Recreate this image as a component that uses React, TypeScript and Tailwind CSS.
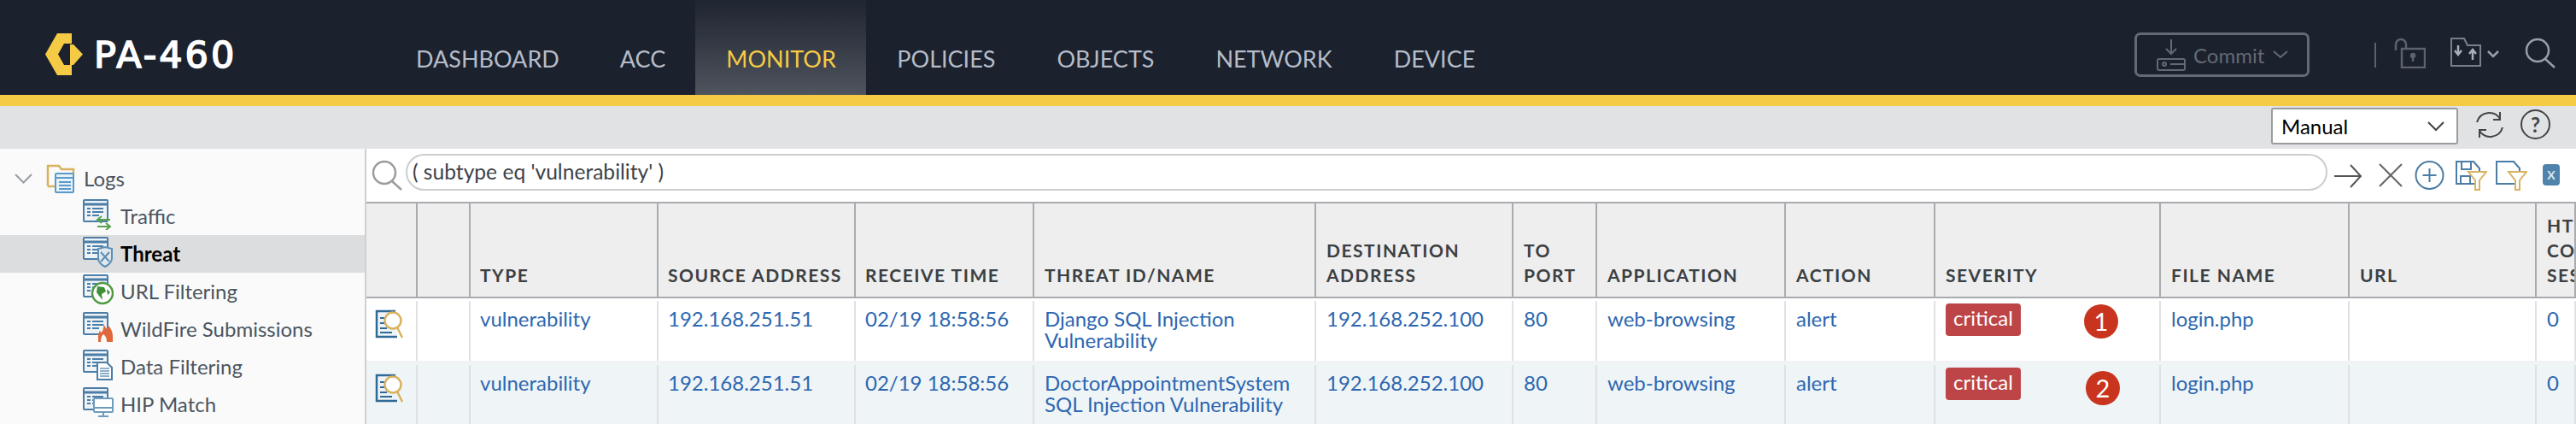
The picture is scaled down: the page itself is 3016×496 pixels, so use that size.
import type { ReactNode } from 'react';

const COLS =
  'grid grid-cols-[60px_62px_220px_231px_209px_330px_231px_98px_221px_175px_264px_221px_219px_46px]';

const NAV = ['DASHBOARD', 'ACC', 'MONITOR', 'POLICIES', 'OBJECTS', 'NETWORK', 'DEVICE'];

const BLUE = '#4b7da6';
const GOLD = '#d9b25f';

const HEADERS: string[][] = [
  [],
  [],
  ['TYPE'],
  ['SOURCE ADDRESS'],
  ['RECEIVE TIME'],
  ['THREAT ID/NAME'],
  ['DESTINATION', 'ADDRESS'],
  ['TO', 'PORT'],
  ['APPLICATION'],
  ['ACTION'],
  ['SEVERITY'],
  ['FILE NAME'],
  ['URL'],
  ['HTTP/2', 'CONNECTION', 'SESSION'],
];

const ROWS = [
  { name: ['Django SQL Injection', 'Vulnerability'], mark: '1', markClass: 'left-[174px] top-[4px]' },
  { name: ['DoctorAppointmentSystem', 'SQL Injection Vulnerability'], mark: '2', markClass: 'left-[176px] top-[7px]' },
];

// base sheet shared by the log type icons
function Sheet({ children }: { children?: ReactNode }) {
  return (
    <svg width="36" height="36" viewBox="0 0 36 36" fill="none" className="shrink-0 self-start mt-[2px]">
      <rect x="1" y="1" width="28" height="25" rx="1" fill="#eef3f7" stroke={BLUE} strokeWidth="2" />
      <path d="M2 6h26" stroke={BLUE} strokeWidth="3" />
      <path d="M5 11h4M5 15h4M5 19h4M11 11h13M11 15h13M11 19h8" stroke={BLUE} strokeWidth="2" />
      {children}
    </svg>
  );
}

function LogsIcon() {
  return (
    <svg width="34" height="36" viewBox="0 0 34 36" fill="none" className="shrink-0">
      <path d="M2 27V3h13l3 4h14v5" stroke={GOLD} strokeWidth="2.5" />
      <path d="M2 27h8" stroke={GOLD} strokeWidth="2.5" />
      <rect x="11" y="12" width="21" height="22" rx="1" fill="#e8f1f8" stroke="#5a9ac8" strokeWidth="2" />
      <path d="M12 17h19M15 22h14M15 26h14M15 30h14" stroke="#5a9ac8" strokeWidth="2" />
    </svg>
  );
}

function ReportIcon() {
  return (
    <svg width="36" height="36" viewBox="0 0 36 36" fill="none" className="shrink-0">
      <path d="M24 2H2v30h24" fill="#eef3f7" stroke="#2f6a96" strokeWidth="2.5" />
      <path d="M6 10h8M6 16h6M6 22h8M6 27h14" stroke="#2f6a96" strokeWidth="2" />
      <circle cx="21" cy="13" r="9.5" fill="#fff" stroke={GOLD} strokeWidth="2.5" />
      <path d="M26 21l6 12" stroke={GOLD} strokeWidth="2.5" />
    </svg>
  );
}

function Annotation({ mark, className }: { mark: string; className: string }) {
  return (
    <span
      className={`absolute w-[40px] h-[40px] rounded-full bg-[#c9341f] text-white text-[29px] leading-[40px] text-center ${className}`}
    >
      {mark}
    </span>
  );
}

function TreeRow({ label, icon, active }: { label: string; icon: ReactNode; active?: boolean }) {
  return (
    <div className={`h-[44px] flex items-center pl-[97px] gap-[8px] ${active ? 'bg-[#dcddde]' : ''}`}>
      {icon}
      <span className={`-mt-[2px] ${active ? 'font-bold text-black' : 'text-[#4b5560]'}`}>{label}</span>
    </div>
  );
}

function Cell({ children, wide }: { children?: ReactNode; wide?: boolean }) {
  return (
    <div
      className={`mt-[3px] border-r-2 border-[#dfe1e3] pt-[8px] overflow-hidden whitespace-nowrap ${
        wide ? 'pl-[12px]' : 'pl-[11px]'
      }`}
    >
      {children}
    </div>
  );
}

export default function App() {
  return (
    <div className="w-[3016px] h-[496px] overflow-hidden bg-white [font-family:Lato,sans-serif] text-[24px] leading-[25px]">
      {/* top bar */}
      <header className="h-[111px] bg-[#1b212d] flex">
        <div className="w-[487px] shrink-0 flex items-start pl-[53px] pt-[39px] gap-[13px]">
          <svg width="44" height="49" viewBox="0 0 44 49">
            <path
              d="M31 0H14L0 24.5 14 49h17V37h-9l-7-12.5L22 12h9zM29 13h4l11 11.5L33 37h-4z"
              fill="#f5cb45"
              fillRule="evenodd"
            />
          </svg>
          <span className="[font-family:'DejaVu_Sans',sans-serif] text-[43px] leading-[50px] tracking-[3px] text-white [-webkit-text-stroke:1.6px_white]">
            PA-460
          </span>
        </div>
        <nav className="flex">
          {NAV.map((item) =>
            item === 'MONITOR' ? (
              <div
                key={item}
                className="w-[200px] pl-[36px] pt-[54px] bg-gradient-to-b from-[#1f2531] to-[#4f545d] text-[#f5cb45] text-[27px] leading-[30px]"
              >
                {item}
              </div>
            ) : (
              <div
                key={item}
                className={`pt-[54px] text-[#b5bcc9] text-[27px] leading-[30px] ${
                  item === 'DASHBOARD' ? 'mr-[71px]' : item === 'ACC' ? 'mr-[35px]' : 'ml-[36px] mr-[36px]'
                }`}
              >
                {item}
              </div>
            ),
          )}
        </nav>
        <div className="ml-auto flex items-start pt-[38px]">
          <div className="w-[205px] h-[52px] border-[3px] border-[#646a73] rounded-[7px] flex items-center pl-[23px] gap-[9px] text-[#646a73]">
            <svg width="34" height="38" viewBox="0 0 34 38" fill="none" stroke="#646a73" strokeWidth="2">
              <path d="M17 1v17M11 12l6 6 6-6" />
              <rect x="1" y="24" width="32" height="13" rx="2" />
              <circle cx="9" cy="30" r="2" />
              <path d="M16 30h17" />
            </svg>
            <span>Commit</span>
            <svg width="18" height="10" viewBox="0 0 18 10" fill="none" stroke="#646a73" strokeWidth="2" className="ml-[1px]">
              <path d="M1 1l8 7 8-7" />
            </svg>
          </div>
          <div className="w-[2px] h-[29px] mt-[12px] ml-[76px] bg-[#5d636c]" />
          <svg width="37" height="36" viewBox="0 0 37 36" fill="none" stroke="#5d636c" strokeWidth="2.5" className="mt-[6px] ml-[21px]">
            <path d="M2 15V8a6 6 0 0 1 12 0v5" />
            <rect x="9" y="13" width="27" height="22" />
            <circle cx="22" cy="21" r="2" fill="#5d636c" />
            <path d="M22 22v6" />
          </svg>
          <svg width="36" height="34" viewBox="0 0 36 34" fill="none" className="mt-[6px] ml-[29px]">
            <path d="M1 33V1h15l4 8h15v24z" stroke="#7a808a" strokeWidth="2" />
            <path d="M9 9v11M5 15l4 5 4-5M26 26V14M22 19l4-5 4 5" stroke="#aab0b8" strokeWidth="2.5" />
          </svg>
          <svg width="14" height="10" viewBox="0 0 14 10" fill="none" stroke="#9aa0a8" strokeWidth="2.5" className="mt-[21px] ml-[7px]">
            <path d="M1 1l6 6 6-6" />
          </svg>
          <svg width="37" height="36" viewBox="0 0 37 36" fill="none" stroke="#9aa0a8" strokeWidth="2.5" className="mt-[6px] ml-[30px] mr-[23px]">
            <circle cx="15" cy="15" r="13" />
            <path d="M24 25l11 10" />
          </svg>
        </div>
      </header>
      <div className="h-[13px] bg-[#f5cb45]" />

      {/* manual refresh strip */}
      <div className="h-[50px] bg-[#e1e2e4] flex items-start justify-end pt-[2px] pr-[30px]">
        <div className="w-[219px] h-[43px] bg-white border-2 border-[#9a9ca0] rounded-[3px] flex items-center justify-between pl-[10px] pr-[14px] text-black">
          <span>Manual</span>
          <svg width="20" height="12" viewBox="0 0 20 12" fill="none" stroke="#444" strokeWidth="2">
            <path d="M1 1l9 9 9-9" />
          </svg>
        </div>
        <svg width="34" height="32" viewBox="0 0 34 32" fill="none" stroke="#444" strokeWidth="2" className="mt-[4px] ml-[20px]">
          <path d="M2 13A15 15 0 0 1 29 9M32 19A15 15 0 0 1 5 23" />
          <path d="M29 1v9h-8M5 31v-9h8" />
        </svg>
        <div className="w-[35px] h-[35px] mt-[2px] ml-[19px] rounded-full border-2 border-[#444] text-[#444] text-center leading-[31px] font-bold">
          ?
        </div>
      </div>

      <div className="flex h-[322px]">
        {/* tree */}
        <aside className="w-[429px] shrink-0 pt-[13px] bg-[#fafafa] border-r-2 border-[#cfd0d2]">
          <div className="h-[44px] flex items-center pl-[17px] text-[#4b5560]">
            <svg width="21" height="12" viewBox="0 0 21 12" fill="none" stroke="#9a9ea3" strokeWidth="2">
              <path d="M1 1l9.500 9.500L20 1" />
            </svg>
            <span className="ml-[16px]">
              <LogsIcon />
            </span>
            <span className="ml-[10px] -mt-[2px]">Logs</span>
          </div>
          <TreeRow
            label="Traffic"
            icon={
              <Sheet>
                <path d="M18 24h14M22 20l-5 4 5 4M17 32h15M27 28l5 4-5 4" stroke="#55a24d" strokeWidth="2" />
              </Sheet>
            }
          />
          <TreeRow
            active
            label="Threat"
            icon={
              <Sheet>
                <path d="M18 14l8-2 8 2v11c0 5-4 8-8 10-4-2-8-5-8-10z" fill="#dfe6ec" stroke="#5a8fb8" strokeWidth="2" />
                <path d="M21 18l10 11M31 18L21 29" stroke="#5a8fb8" strokeWidth="2" />
              </Sheet>
            }
          />
          <TreeRow
            label="URL Filtering"
            icon={
              <Sheet>
                <circle cx="23" cy="22" r="12" fill="#fff" stroke="#4f9a45" strokeWidth="2.5" />
                <path d="M17 14l8 1 2 5-5 3 1 7-4-5-3-4zM28 17l4 4-3 3z" fill="#3f8f38" />
              </Sheet>
            }
          />
          <TreeRow
            label="WildFire Submissions"
            icon={
              <Sheet>
                <path
                  d="M24 12c1 5 3 6 4 8 1-1 2-2 2-4 3 3 5 8 5 12v7H18v-7c0-3 1-4 2-6 1 1 1 2 2 2 2-3 3-7 2-12z"
                  fill="#e0683a"
                />
                <path d="M24 26c-2 2-3 4-3 9h7c0-4-1-7-4-9z" fill="#fafafa" />
              </Sheet>
            }
          />
          <TreeRow
            label="Data Filtering"
            icon={
              <Sheet>
                <path d="M17 15h11l6 6v14H17z" fill="#fff" stroke={BLUE} strokeWidth="2" />
                <path d="M20 22h11M20 25h11M20 28h11M20 31h11" stroke="#8db0c9" strokeWidth="2" />
              </Sheet>
            }
          />
          <TreeRow
            label="HIP Match"
            icon={
              <Sheet>
                <rect x="13" y="13" width="22" height="16" rx="1" fill="#fff" stroke="#6f9cbd" strokeWidth="2" />
                <path d="M14 24h20M24 29v4M18 34h12" stroke="#6f9cbd" strokeWidth="2" />
              </Sheet>
            }
          />
        </aside>

        <main className="flex-1 min-w-0 overflow-hidden">
          {/* filter row */}
          <div className="h-[62px] flex items-start pt-[6px] pl-[6px]">
            <svg width="37" height="36" viewBox="0 0 37 36" fill="none" stroke="#9a9c9e" strokeWidth="2.5" className="mt-[7px]">
              <circle cx="15" cy="15" r="13" />
              <path d="M24 25l11 10" />
            </svg>
            <div className="w-[2250px] h-[43px] ml-[3px] rounded-full border-2 border-[#cccdce] pl-[6px] text-[24.6px] leading-[37px] text-[#3d4247]">
              ( subtype eq 'vulnerability' )
            </div>
            <svg width="33" height="28" viewBox="0 0 33 28" fill="none" stroke="#555" strokeWidth="2" className="mt-[12px] ml-[8px]">
              <path d="M0 14h31M19 1l12 13-12 13" />
            </svg>
            <svg width="28" height="28" viewBox="0 0 28 28" fill="none" stroke="#666" strokeWidth="2" className="mt-[11px] ml-[19px]">
              <path d="M1 1l26 26M27 1L1 27" />
            </svg>
            <svg width="35" height="34" viewBox="0 0 35 34" fill="none" stroke={BLUE} strokeWidth="2" className="mt-[8px] ml-[14px]">
              <circle cx="17.500" cy="17" r="16" />
              <path d="M17.500 9v16M9.500 17h16" />
            </svg>
            <svg width="37" height="35" viewBox="0 0 37 35" fill="none" className="mt-[8px] ml-[13px]">
              <path d="M1 1h20l7 8v18H1z" stroke={BLUE} strokeWidth="2" />
              <path d="M7 1v9h11V1M6 27v-9h11v9" stroke={BLUE} strokeWidth="2" />
              <path d="M15 13h21l-8 10v11h-5V23z" fill="#fff" stroke={GOLD} strokeWidth="2" />
            </svg>
            <svg width="37" height="35" viewBox="0 0 37 35" fill="none" className="mt-[8px] ml-[10px]">
              <path d="M1 1h20l7 8v18H1z" stroke={BLUE} strokeWidth="2" />
              <path d="M15 13h21l-8 10v11h-5V23z" fill="#fff" stroke={GOLD} strokeWidth="2" />
            </svg>
            <div className="w-[20px] h-[25px] mt-[12px] ml-[18px] rounded-[4px] bg-[#4f83ab] text-[#dfe8ef] text-[14px] leading-[25px] text-center font-bold">
              X
            </div>
          </div>

          {/* log table */}
          <div className={`${COLS} h-[113px] bg-[#eeeeee] border-y-2 border-[#a9abaf]`}>
            {HEADERS.map((lines, i) => (
              <div
                key={i}
                className={`border-r-2 border-[#a9abaf] flex flex-col justify-end pb-[11px] overflow-hidden font-bold text-[21px] leading-[29px] tracking-[1.5px] text-[#3c4043] whitespace-nowrap ${
                  i >= 5 ? 'pl-[12px]' : 'pl-[11px]'
                }`}
              >
                {lines.map((line) => (
                  <div key={line}>{line}</div>
                ))}
              </div>
            ))}
          </div>
          {ROWS.map((row, r) => (
            <div
              key={row.mark}
              className={`${COLS} h-[75px] border-b-2 border-[#eff1f3] text-[#2d67b0] ${r === 1 ? 'bg-[#eff4f7]' : ''}`}
            >
              <div className="mt-[3px] border-r-2 border-[#dfe1e3] pl-[10px] pt-[10px]">
                <ReportIcon />
              </div>
              <div className="mt-[3px] border-r-2 border-[#dfe1e3]" />
              <Cell>vulnerability</Cell>
              <Cell>192.168.251.51</Cell>
              <Cell>02/19 18:58:56</Cell>
              <Cell wide>
                {row.name.map((line) => (
                  <div key={line}>{line}</div>
                ))}
              </Cell>
              <Cell wide>192.168.252.100</Cell>
              <Cell wide>80</Cell>
              <Cell wide>web-browsing</Cell>
              <Cell wide>alert</Cell>
              <div className="relative mt-[3px] border-r-2 border-[#dfe1e3] pl-[12px] pt-[3px]">
                <span className="block w-[88px] h-[38px] rounded-[4px] bg-[#bd4547] text-white text-center leading-[34px]">
                  critical
                </span>
                <Annotation mark={row.mark} className={row.markClass} />
              </div>
              <Cell wide>login.php</Cell>
              <Cell wide />
              <Cell wide>0</Cell>
            </div>
          ))}
        </main>
      </div>
    </div>
  );
}
